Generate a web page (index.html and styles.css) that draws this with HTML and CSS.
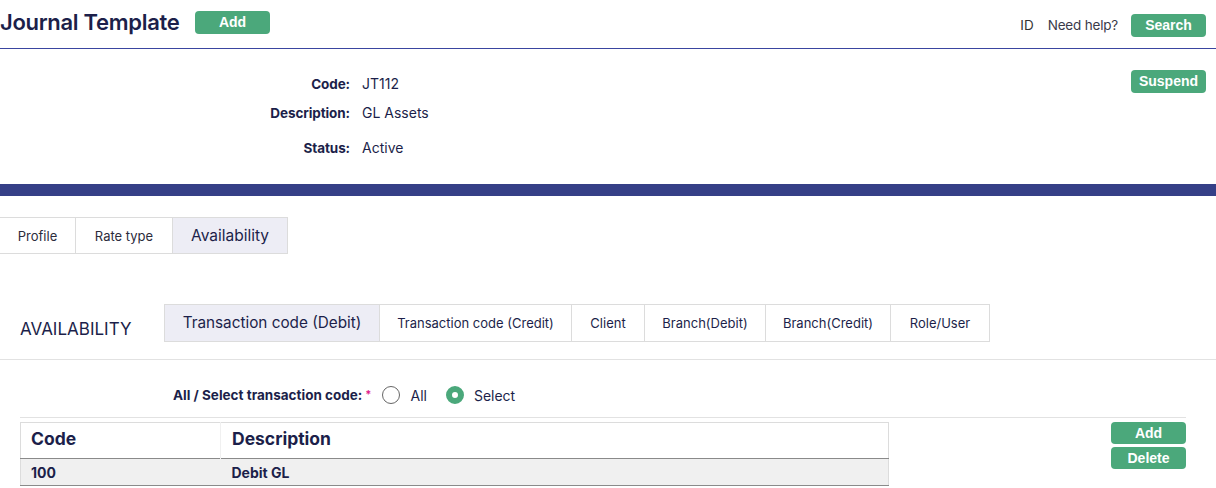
FILE: index.html
```html
<!DOCTYPE html>
<html>
<head>
<meta charset="utf-8">
<link rel="stylesheet" href="styles.css">
</head>
<body>
<header class="topbar">
  <div class="title-group">
    <h1 class="title">Journal Template</h1>
    <button class="btn btn-top">Add</button>
  </div>
  <div class="top-right">
    <span class="id">ID</span>
    <span class="help">Need help?</span>
    <button class="btn btn-search">Search</button>
  </div>
</header>

<section class="info">
  <div class="fields">
    <div class="field f-code"><span class="label">Code:</span><span class="value">JT112</span></div>
    <div class="field f-desc"><span class="label">Description:</span><span class="value">GL Assets</span></div>
    <div class="field f-status"><span class="label">Status:</span><span class="value">Active</span></div>
  </div>
  <button class="btn btn-suspend">Suspend</button>
</section>

<div class="band"></div>

<nav class="tabs">
  <div class="tab t-profile">Profile</div>
  <div class="tab t-rate">Rate type</div>
  <div class="tab t-avail active">Availability</div>
</nav>

<section class="avail-head">
  <div class="avail-title">AVAILABILITY</div>
  <div class="subtabs">
    <div class="subtab active w1">Transaction code (Debit)</div>
    <div class="subtab w2">Transaction code (Credit)</div>
    <div class="subtab w3">Client</div>
    <div class="subtab w4">Branch(Debit)</div>
    <div class="subtab w5">Branch(Credit)</div>
    <div class="subtab w6">Role/User</div>
  </div>
</section>

<section class="selector">
  <div class="radio-row">
    <span class="sel-label">All / Select transaction code:<span class="req">*</span></span>
    <span class="radio"></span><span class="radio-text">All</span>
    <span class="radio checked"></span><span class="radio-text">Select</span>
  </div>
</section>

<section class="table-area">
  <table class="grid">
    <thead>
      <tr><th class="c1">Code</th><th class="c2">Description</th></tr>
    </thead>
    <tbody>
      <tr><td class="c1">100</td><td class="c2">Debit GL</td></tr>
    </tbody>
  </table>
  <div class="side-btns">
    <button class="btn btn-side">Add</button>
    <button class="btn btn-side">Delete</button>
  </div>
</section>
</body>
</html>
```

FILE: styles.css
```css
* { box-sizing: border-box; }
html, body { margin: 0; padding: 0; }
body {
  width: 1216px;
  font-family: "Inter", "Liberation Sans", sans-serif;
  color: #1c1f4a;
  background: #fff;
  overflow: hidden;
}

.btn {
  background: #4ba87b;
  color: #fff;
  border: none;
  border-radius: 4px;
  font-family: "Liberation Sans", Arial, sans-serif;
  font-weight: 700;
  font-size: 14px;
  width: 75px;
  height: 23px;
  padding: 0;
  line-height: 23px;
  text-align: center;
}

.topbar {
  height: 49px;
  border-bottom: 1px solid #3a45a0;
  display: flex;
  justify-content: space-between;
}
.title-group { display: flex; align-items: flex-start; }
.title {
  margin: 0;
  padding-top: 8px;
  font-size: 22px;
  font-weight: 600;
  line-height: 28px;
  letter-spacing: -0.3px;
  color: #1c1f4a;
  width: 180px;
  white-space: nowrap;
}
.btn-top { margin-left: 15px; margin-top: 11px; }
.top-right {
  display: flex;
  align-items: center;
  height: 50px;
  padding-right: 10px;
}
.top-right .id { font-size: 13.5px; color: #333; }
.top-right .help {
  font-size: 13.5px;
  color: #3a3a4a;
  margin-left: 14px;
  letter-spacing: -0.2px;
}
.btn-search { margin-left: 13px; }

.info {
  height: 135px;
  display: flex;
  justify-content: space-between;
  align-items: flex-start;
}
.fields { padding-top: 25px; }
.field {
  display: grid;
  grid-template-columns: 350px auto;
  column-gap: 12px;
  font-size: 14px;
  line-height: 20px;
}
.f-desc { margin-top: 9px; }
.f-status { margin-top: 15px; }
.label { text-align: right; font-weight: 700; color: #1c1f4a; font-size: 13.5px; letter-spacing: -0.1px; }
.value { color: #1c1f4a; }
.btn-suspend { margin-top: 21px; margin-right: 10px; }

.band { height: 12px; background: #353f87; }

.tabs {
  display: flex;
  margin-top: 21px;
  height: 37px;
}
.tab {
  border-top: 1px solid #dcdcdc;
  border-bottom: 1px solid #dcdcdc;
  border-right: 1px solid #dcdcdc;
  font-size: 13px;
  color: #2c2c3c;
  display: flex;
  align-items: center;
  justify-content: center;
}
.t-profile { width: 76px; }
.t-rate { width: 97px; }
.t-avail { width: 115px; }
.tab.active { background: #ededf5; font-size: 15.5px; color: #1c1f4a; }

.avail-head {
  margin-top: 50px;
  height: 56px;
  border-bottom: 1px solid #e2e2e2;
  display: flex;
  align-items: flex-start;
}
.avail-title {
  width: 164px;
  padding-left: 20px;
  padding-top: 15px;
  font-size: 17px;
  line-height: 20px;
  color: #1c1f4a;
}
.subtabs { display: flex; height: 38px; }
.subtab {
  border-top: 1px solid #dcdcdc;
  border-bottom: 1px solid #dcdcdc;
  border-right: 1px solid #dcdcdc;
  font-size: 13px;
  color: #1c1f4a;
  display: flex;
  align-items: center;
  justify-content: center;
}
.subtab.active {
  background: #ededf5;
  font-size: 15.3px;
  border-left: 1px solid #dcdcdc;
  padding-bottom: 2px;
}
.w1 { width: 216px; }
.w2 { width: 192px; }
.w3 { width: 73px; }
.w4 { width: 121px; }
.w5 { width: 125px; }
.w6 { width: 99px; }

.selector { padding: 0 30px 0 20px; }
.radio-row {
  height: 58px;
  border-bottom: 1px solid #e2e2e2;
  display: flex;
  align-items: center;
  padding-left: 153px;
  padding-top: 13px;
  width: 1166px;
}
.sel-label { font-size: 13.5px; font-weight: 700; color: #1c1f4a; }
.req { color: #e0218a; margin-left: 3px; font-size: 11px; vertical-align: 2px; }
.radio {
  width: 18px; height: 18px;
  border-radius: 50%;
  border: 1px solid #666;
  margin-left: 11px;
  background: #fff;
}
.radio.checked {
  border: 6px solid #4ba87b;
  background: #fff;
  margin-left: 19px;
}
.radio-text { margin-left: 10px; font-size: 14px; color: #1c1f4a; }

.table-area {
  display: flex;
  padding: 4px 30px 0 20px;
  justify-content: space-between;
  align-items: flex-start;
}
.grid {
  width: 869px;
  border-collapse: collapse;
  border: 1px solid #dcdcdc;
}
.grid th {
  text-align: left;
  font-size: 17.5px;
  font-weight: 700;
  color: #1c1f4a;
  height: 36px;
  padding: 0 10px 4px;
  background: #fff;
}
.grid th.c1 { width: 200px; border-right: 1px solid #f0f0f0; }
.grid td {
  font-size: 14px;
  font-weight: 700;
  color: #1c1f4a;
  height: 27px;
  padding: 0 10px;
  background: #f0f0f0;
  border-top: 1px solid #8a8a8a;
  border-bottom: 1px solid #8a8a8a;
}
.grid td.c2, .grid th.c2 { padding-left: 11px; }
.side-btns { display: flex; flex-direction: column; gap: 3px; }
.btn-side { height: 22px; line-height: 22px; }
```
